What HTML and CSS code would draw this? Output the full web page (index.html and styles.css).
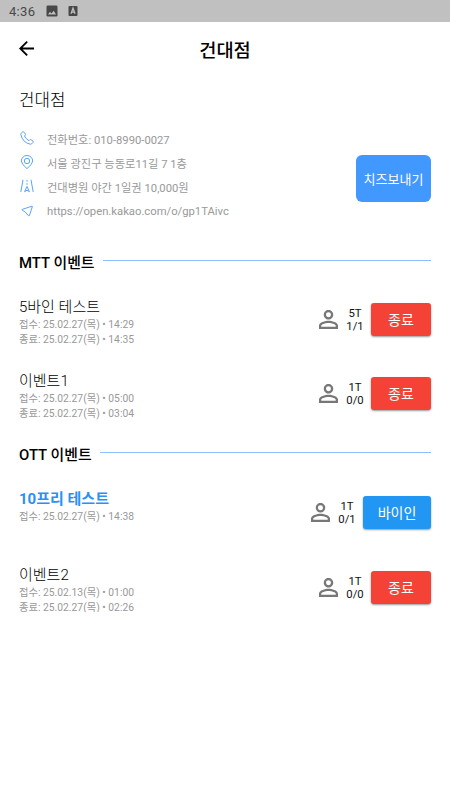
FILE: index.html
```html
<!DOCTYPE html>
<html lang="ko">
  <head>
    <meta charset="UTF-8" />
    <title>건대점</title>
    <link rel="stylesheet" href="styles.css">
  </head>
  <body>
    <svg class="symbols">
      <symbol id="person" viewBox="4 4 16 16">
        <path fill="currentColor" d="M12 5.9a2.1 2.1 0 1 1 0 4.2 2.1 2.1 0 0 1 0-4.2m0 9c2.97 0 6.1 1.46 6.1 2.1v1.1H5.9V17c0-.64 3.13-2.1 6.1-2.1M12 4C9.79 4 8 5.79 8 8s1.79 4 4 4 4-1.79 4-4-1.79-4-4-4zm0 9c-2.67 0-8 1.34-8 4v3h16v-3c0-2.66-5.33-4-8-4z" />
      </symbol>
    </svg>

    <div class="status-bar">
      <span class="clock">4:36</span>
      <svg class="status-icon picture" viewBox="0 0 12 12">
        <rect x="0.5" y="0.5" width="11" height="11" rx="1.2" fill="#484848" />
        <path d="M2 9.5l2-2.8 1.5 1.7L7.7 5.8 10 9.5z" fill="#c0c0c0" />
      </svg>
      <svg class="status-icon" viewBox="0 0 12 12">
        <rect x="1.5" y="1" width="9" height="10" rx="1" fill="#484848" />
        <path d="M4 8.8l2-5.6 2 5.6M4.8 7.2h2.4" fill="none" stroke="#c0c0c0" stroke-width="1.3" />
      </svg>
    </div>

    <header class="app-bar">
      <svg class="back" viewBox="4 4 16 16">
        <path fill="#000" d="M20 11H7.83l5.59-5.59L12 4l-8 8 8 8 1.41-1.41L7.83 13H20v-2z" />
      </svg>
      <h1>건대점</h1>
    </header>

    <main>
      <h2 class="shop-name">건대점</h2>
      <div class="shop">
        <ul class="info">
          <li>
            <svg viewBox="0 0 14 14"><path d="M1.2 2.2L2.8.8q.6-.4 1.1.2l1.5 2q.4.6-.1 1.1l-.9.9q1.5 3 4.6 4.7l.9-.9q.5-.5 1.1-.1l2 1.5q.6.5.1 1.1l-1.4 1.5q-.5.5-1.4.4Q2.5 11.5.8 3.5q-.1-.8.4-1.3z" /></svg>
            <span>전화번호: 010-8990-0027</span>
          </li>
          <li>
            <svg viewBox="0 0 14 14"><path d="M7 13.6Q1.300 9 1.300 6a5.700 5.500 0 0 1 11.400 0Q12.700 9 7 13.600z" /><circle cx="7" cy="6" r="2.700" /></svg>
            <span>서울 광진구 능동로11길 7 1층</span>
          </li>
          <li>
            <svg viewBox="0 0 14 14"><path d="M3 .8L.8 13M11 .8L13.2 13M7 .8v1.800M7 4.200v1.600M7 7.500l-2.400 5.200L7 11.200l2.400 1.500z" /></svg>
            <span>건대병원 야간 1일권 10,000원</span>
          </li>
          <li>
            <svg viewBox="0 0 14 14"><path d="M12 2.200L2.200 5.400q-.6.300 0 .7l3.100 2 3.200 3.700q.6.500.9-.2l2.900-8.900q.1-.6-.3-.5z" /></svg>
            <span>https://open.kakao.com/o/gp1TAivc</span>
          </li>
        </ul>
        <button class="send">치즈보내기</button>
      </div>

      <h3 class="section-title">MTT 이벤트</h3>
      <div class="event">
        <div class="detail">
          <p class="name">5바인 테스트</p>
          <p>접수: 25.02.27(목) • 14:29</p>
          <p>종료: 25.02.27(목) • 14:35</p>
        </div>
        <svg class="person"><use href="#person" /></svg>
        <div class="count">5T<br />1/1</div>
        <button class="closed">종료</button>
      </div>
      <div class="event">
        <div class="detail">
          <p class="name">이벤트1</p>
          <p>접수: 25.02.27(목) • 05:00</p>
          <p>종료: 25.02.27(목) • 03:04</p>
        </div>
        <svg class="person"><use href="#person" /></svg>
        <div class="count">1T<br />0/0</div>
        <button class="closed">종료</button>
      </div>

      <h3 class="section-title">OTT 이벤트</h3>
      <div class="event open">
        <div class="detail">
          <p class="name">10프리 테스트</p>
          <p>접수: 25.02.27(목) • 14:38</p>
        </div>
        <svg class="person"><use href="#person" /></svg>
        <div class="count">1T<br />0/1</div>
        <button class="buy-in">바이인</button>
      </div>
      <div class="event">
        <div class="detail">
          <p class="name">이벤트2</p>
          <p>접수: 25.02.13(목) • 01:00</p>
          <p>종료: 25.02.27(목) • 02:26</p>
        </div>
        <svg class="person"><use href="#person" /></svg>
        <div class="count">1T<br />0/0</div>
        <button class="closed">종료</button>
      </div>
    </main>
  </body>
</html>
```
FILE: styles.css
```css
* {
  box-sizing: border-box;
  margin: 0;
  padding: 0;
}

body {
  font-family: Roboto, "Noto Sans CJK KR", sans-serif;
  background-color: #fff;
  color: #111;
}

.symbols {
  display: none;
}

.status-bar {
  display: flex;
  align-items: center;
  height: 22px;
  padding-left: 9px;
  background-color: #c0c0c0;
}

.clock {
  width: 37px;
  font-size: 13px;
  letter-spacing: 0.3px;
  line-height: 22px;
  color: #484848;
  padding-top: 2px;
}

.status-icon {
  width: 12px;
  height: 12px;
}

.status-icon.picture {
  margin-right: 9px;
}

.app-bar {
  display: grid;
  grid-template-columns: 15px 1fr 15px;
  align-items: center;
  height: 55px;
  padding: 0 19px;
}

.back {
  width: 15px;
  height: 15px;
  margin-top: -2px;
}

h1 {
  font-size: 18.7px;
  font-weight: 500;
  line-height: 24px;
  text-align: center;
  color: #000;
  padding-top: 2px;
}

main {
  padding: 11px 19px 0;
}

.shop-name {
  font-size: 16.8px;
  font-weight: 300;
  line-height: 24px;
  color: #000;
}

.shop {
  display: flex;
  justify-content: space-between;
  margin-top: 15px;
}

.info {
  list-style: none;
}

.info li {
  display: flex;
  align-items: center;
  height: 24.2px;
  font-size: 11.25px;
  color: #999;
}

.info svg {
  width: 14px;
  height: 14px;
  margin: -2px 13px 0 1px;
  fill: none;
  stroke: #4a98f5;
  stroke-width: 0.9;
}

button {
  font-family: inherit;
  font-weight: 400;
  color: #fff;
  border: none;
}

.send {
  width: 75px;
  height: 47px;
  margin-top: 28px;
  font-size: 13px;
  background-color: #4198ff;
  border-radius: 6px;
}

.section-title {
  display: flex;
  align-items: center;
  height: 24px;
  margin-top: 26px;
  font-size: 14.9px;
  font-weight: 500;
  color: #000;
}

.section-title::after {
  content: "";
  flex: 1;
  height: 1px;
  margin: -2px 0 0 8px;
  background-color: #8bbfff;
}

.event {
  display: flex;
  align-items: center;
  height: 48px;
  margin-top: 22px;
}

.event + .event {
  margin-top: 26px;
}

.event + .section-title {
  margin-top: 24px;
}

.detail {
  align-self: flex-start;
  flex: 1;
  font-size: 10.3px;
  line-height: 15px;
  color: #999;
}

.name {
  padding-top: 2px;
  font-size: 15px;
  font-weight: 300;
  line-height: 19px;
  color: #000;
}

.open {
  margin-top: 23px;
}

.open .name {
  padding-top: 0;
  font-weight: 700;
  line-height: 20px;
  color: #2a8ff7;
}

.open + .event {
  margin-top: 27px;
}

.person {
  width: 19px;
  height: 19px;
  margin-right: 8px;
  color: #777;
}

.count {
  width: 18px;
  margin-right: 7px;
  font-size: 11.3px;
  line-height: 13px;
  text-align: center;
}

.event button {
  height: 33px;
  padding-bottom: 1px;
  font-size: 14px;
  border-radius: 3px;
  box-shadow: 0 1px 2px rgba(0, 0, 0, 0.4);
}

.closed {
  width: 60px;
  background-color: #f44336;
}

.buy-in {
  width: 68px;
  background-color: #2196f3;
}
```
